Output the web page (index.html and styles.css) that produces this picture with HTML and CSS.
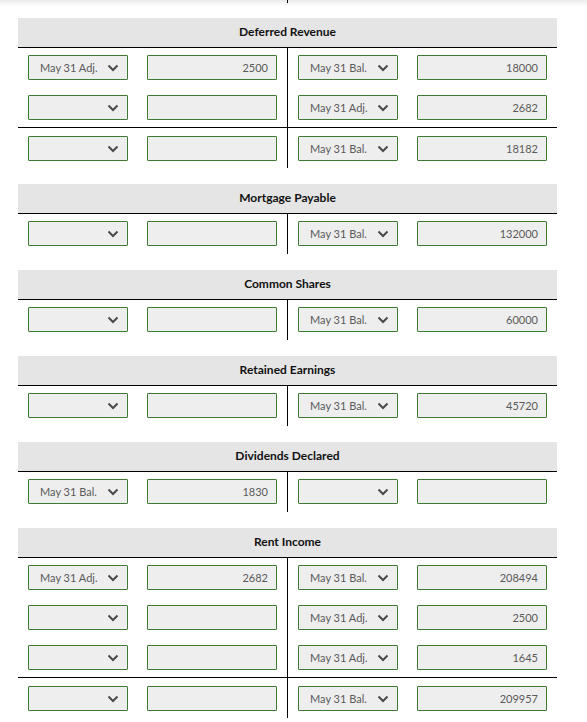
FILE: index.html
```html
<!DOCTYPE html>
<html lang="en">
<head>
<meta charset="utf-8">
<title>T-Accounts</title>
<link rel="stylesheet" href="styles.css">
</head>
<body>
<div class="fade"><div class="stub"></div></div>
<main class="ledger">

  <section class="account">
    <div class="acct-head">Deferred Revenue</div>
    <div class="row">
      <div class="side"><div class="sel"><span>May 31 Adj.</span><svg class="chev" viewBox="0 0 12 8"><path d="M1.5 1.5L6 6l4.5-4.5"/></svg></div><div class="amt">2500</div></div>
      <div class="side right"><div class="sel"><span>May 31 Bal.</span><svg class="chev" viewBox="0 0 12 8"><path d="M1.5 1.5L6 6l4.5-4.5"/></svg></div><div class="amt">18000</div></div>
    </div>
    <div class="row">
      <div class="side"><div class="sel"><span></span><svg class="chev" viewBox="0 0 12 8"><path d="M1.5 1.5L6 6l4.5-4.5"/></svg></div><div class="amt"></div></div>
      <div class="side right"><div class="sel"><span>May 31 Adj.</span><svg class="chev" viewBox="0 0 12 8"><path d="M1.5 1.5L6 6l4.5-4.5"/></svg></div><div class="amt">2682</div></div>
    </div>
    <div class="row total">
      <div class="side"><div class="sel"><span></span><svg class="chev" viewBox="0 0 12 8"><path d="M1.5 1.5L6 6l4.5-4.5"/></svg></div><div class="amt"></div></div>
      <div class="side right"><div class="sel"><span>May 31 Bal.</span><svg class="chev" viewBox="0 0 12 8"><path d="M1.5 1.5L6 6l4.5-4.5"/></svg></div><div class="amt">18182</div></div>
    </div>
  </section>

  <section class="account">
    <div class="acct-head">Mortgage Payable</div>
    <div class="row">
      <div class="side"><div class="sel"><span></span><svg class="chev" viewBox="0 0 12 8"><path d="M1.5 1.5L6 6l4.5-4.5"/></svg></div><div class="amt"></div></div>
      <div class="side right"><div class="sel"><span>May 31 Bal.</span><svg class="chev" viewBox="0 0 12 8"><path d="M1.5 1.5L6 6l4.5-4.5"/></svg></div><div class="amt">132000</div></div>
    </div>
  </section>

  <section class="account">
    <div class="acct-head">Common Shares</div>
    <div class="row">
      <div class="side"><div class="sel"><span></span><svg class="chev" viewBox="0 0 12 8"><path d="M1.5 1.5L6 6l4.5-4.5"/></svg></div><div class="amt"></div></div>
      <div class="side right"><div class="sel"><span>May 31 Bal.</span><svg class="chev" viewBox="0 0 12 8"><path d="M1.5 1.5L6 6l4.5-4.5"/></svg></div><div class="amt">60000</div></div>
    </div>
  </section>

  <section class="account">
    <div class="acct-head">Retained Earnings</div>
    <div class="row">
      <div class="side"><div class="sel"><span></span><svg class="chev" viewBox="0 0 12 8"><path d="M1.5 1.5L6 6l4.5-4.5"/></svg></div><div class="amt"></div></div>
      <div class="side right"><div class="sel"><span>May 31 Bal.</span><svg class="chev" viewBox="0 0 12 8"><path d="M1.5 1.5L6 6l4.5-4.5"/></svg></div><div class="amt">45720</div></div>
    </div>
  </section>

  <section class="account">
    <div class="acct-head">Dividends Declared</div>
    <div class="row">
      <div class="side"><div class="sel"><span>May 31 Bal.</span><svg class="chev" viewBox="0 0 12 8"><path d="M1.5 1.5L6 6l4.5-4.5"/></svg></div><div class="amt">1830</div></div>
      <div class="side right"><div class="sel"><span></span><svg class="chev" viewBox="0 0 12 8"><path d="M1.5 1.5L6 6l4.5-4.5"/></svg></div><div class="amt"></div></div>
    </div>
  </section>

  <section class="account">
    <div class="acct-head">Rent Income</div>
    <div class="row">
      <div class="side"><div class="sel"><span>May 31 Adj.</span><svg class="chev" viewBox="0 0 12 8"><path d="M1.5 1.5L6 6l4.5-4.5"/></svg></div><div class="amt">2682</div></div>
      <div class="side right"><div class="sel"><span>May 31 Bal.</span><svg class="chev" viewBox="0 0 12 8"><path d="M1.5 1.5L6 6l4.5-4.5"/></svg></div><div class="amt">208494</div></div>
    </div>
    <div class="row">
      <div class="side"><div class="sel"><span></span><svg class="chev" viewBox="0 0 12 8"><path d="M1.5 1.5L6 6l4.5-4.5"/></svg></div><div class="amt"></div></div>
      <div class="side right"><div class="sel"><span>May 31 Adj.</span><svg class="chev" viewBox="0 0 12 8"><path d="M1.5 1.5L6 6l4.5-4.5"/></svg></div><div class="amt">2500</div></div>
    </div>
    <div class="row">
      <div class="side"><div class="sel"><span></span><svg class="chev" viewBox="0 0 12 8"><path d="M1.5 1.5L6 6l4.5-4.5"/></svg></div><div class="amt"></div></div>
      <div class="side right"><div class="sel"><span>May 31 Adj.</span><svg class="chev" viewBox="0 0 12 8"><path d="M1.5 1.5L6 6l4.5-4.5"/></svg></div><div class="amt">1645</div></div>
    </div>
    <div class="row total">
      <div class="side"><div class="sel"><span></span><svg class="chev" viewBox="0 0 12 8"><path d="M1.5 1.5L6 6l4.5-4.5"/></svg></div><div class="amt"></div></div>
      <div class="side right"><div class="sel"><span>May 31 Bal.</span><svg class="chev" viewBox="0 0 12 8"><path d="M1.5 1.5L6 6l4.5-4.5"/></svg></div><div class="amt">209957</div></div>
    </div>
  </section>

</main>
</body>
</html>
```
FILE: styles.css
```css
* { box-sizing: border-box; }

body {
  margin: 0;
  background: #fff;
  font-family: Lato, "Open Sans", "Liberation Sans", sans-serif;
  color: #555;
}

.fade {
  height: 18px;
  background: linear-gradient(#e9e9e9, #f6f6f6 3px, #fff 7px);
}

.stub {
  margin-left: 287px;
  width: 1px;
  height: 3px;
  background: #000;
}

.ledger {
  margin-left: 18px;
  width: 539px;
}

.account {
  margin-bottom: 16px;
}

.acct-head {
  height: 30px;
  padding-bottom: 2px;
  background: #e5e5e5;
  border-bottom: 1px solid #000;
  display: flex;
  align-items: center;
  justify-content: center;
  font-size: 12px;
  font-weight: 700;
  color: #111;
}

.row {
  display: grid;
  grid-template-columns: 269px 270px;
}

.row.total {
  border-top: 1px solid #000;
  margin-top: -1px;
}

.side {
  display: flex;
  justify-content: space-between;
  padding: 7px 10px 8px;
}

.side.right {
  border-left: 1px solid #000;
}

.row.total .side {
  padding-top: 8px;
  padding-bottom: 7px;
}

.sel,
.amt {
  height: 25px;
  border: 1px solid #3f7a35;
  border-radius: 1px;
  background: #eeeeee;
  font-size: 11px;
  color: #5a5a5a;
  display: flex;
  align-items: center;
}

.sel {
  width: 100px;
  padding: 0 8px 0 11px;
  justify-content: space-between;
}

.amt {
  width: 130px;
  padding-right: 8px;
  justify-content: flex-end;
}

.chev {
  width: 12px;
  height: 8px;
  fill: none;
  stroke: #4a4a4a;
  stroke-width: 2;
  flex: none;
  margin-left: auto;
}
```
